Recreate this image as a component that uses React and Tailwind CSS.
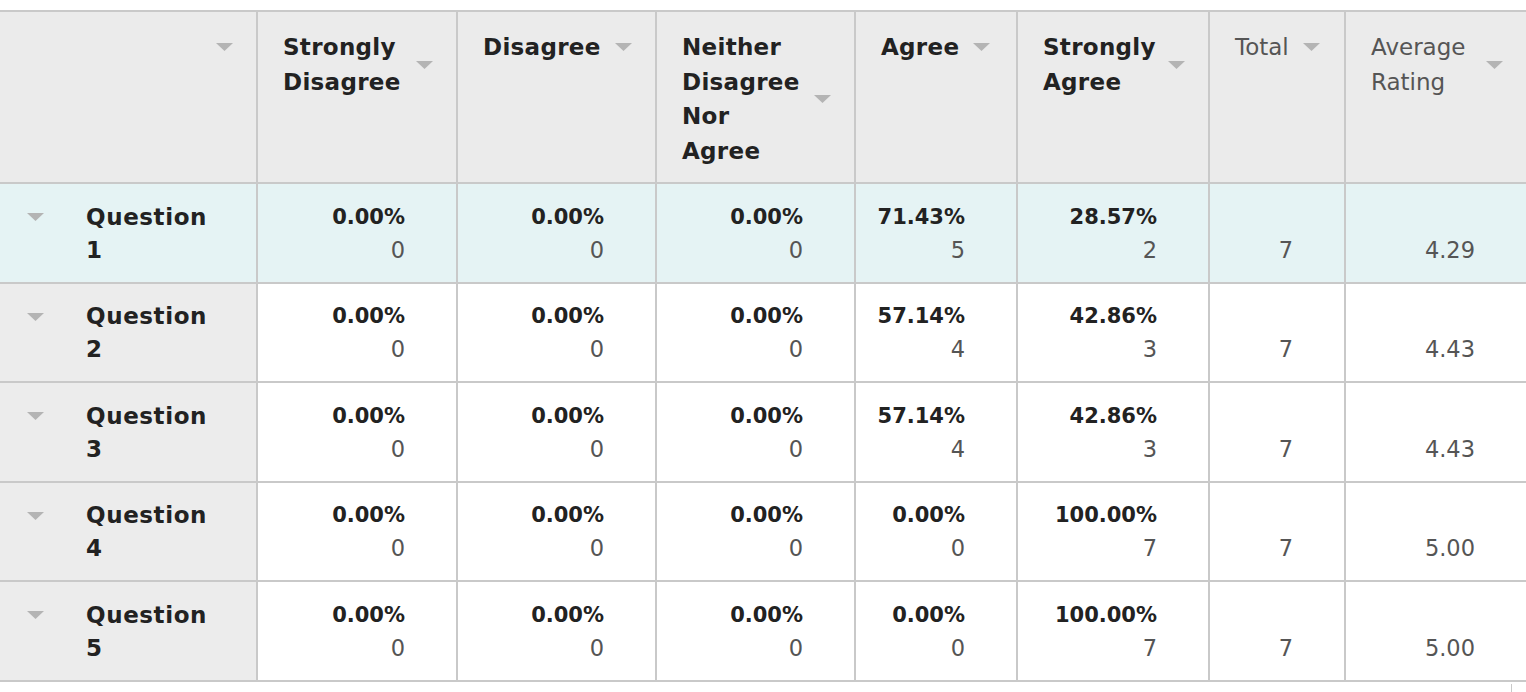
import React from "react";

const cols = "grid grid-cols-[258px_200px_199px_199px_162px_192px_136px_180px]";
const line = "border-[#c9c9c9]";

const headers = [
  { lines: [], wrap: true },
  { lines: ["Strongly", "Disagree"], wrap: true },
  { lines: ["Disagree"] },
  { lines: ["Neither", "Disagree", "Nor", "Agree"], wrap: true },
  { lines: ["Agree"] },
  { lines: ["Strongly", "Agree"], wrap: true },
  { lines: ["Total"], light: true },
  { lines: ["Average", "Rating"], wrap: true, light: true },
];

const rows = [
  { n: 1, v: [["0.00%", 0], ["0.00%", 0], ["0.00%", 0], ["71.43%", 5], ["28.57%", 2]], total: 7, avg: "4.29", hi: true },
  { n: 2, v: [["0.00%", 0], ["0.00%", 0], ["0.00%", 0], ["57.14%", 4], ["42.86%", 3]], total: 7, avg: "4.43" },
  { n: 3, v: [["0.00%", 0], ["0.00%", 0], ["0.00%", 0], ["57.14%", 4], ["42.86%", 3]], total: 7, avg: "4.43" },
  { n: 4, v: [["0.00%", 0], ["0.00%", 0], ["0.00%", 0], ["0.00%", 0], ["100.00%", 7]], total: 7, avg: "5.00" },
  { n: 5, v: [["0.00%", 0], ["0.00%", 0], ["0.00%", 0], ["0.00%", 0], ["100.00%", 7]], total: 7, avg: "5.00" },
];

function Arrow() {
  return (
    <svg width="17" height="8" viewBox="0 0 17 8" className="shrink-0">
      <path d="M0 0H17L8.5 8Z" fill="#b4b4b4" />
    </svg>
  );
}

function HeaderCell({ h, last }) {
  return (
    <div
      className={`h-[172px] bg-[#ebebeb] border-b-2 ${line} ${last ? "" : "border-r-2"} pl-[25px] pr-[23px] pt-[18px]`}
    >
      <div className="flex items-center">
        <div
          className={`${h.wrap ? "flex-1" : ""} min-h-[34.5px] leading-[34.5px] text-[23px] whitespace-nowrap ${
            h.light ? "font-normal text-[#555] text-[22.5px]" : "font-bold text-[#222] tracking-[0.3px]"
          }`}
        >
          {h.lines.map((l) => (
            <div key={l}>{l}</div>
          ))}
        </div>
        <div className={h.wrap ? "" : "ml-[14px]"}>
          <Arrow />
        </div>
      </div>
    </div>
  );
}

function ValueCell({ pct, count, bg, last }) {
  return (
    <div
      className={`h-[99.5px] ${bg} border-b-2 ${line} ${last ? "" : "border-r-2"} pt-[16.5px] pr-[51px] text-right leading-[33px]`}
    >
      <div className="h-[33px] font-bold text-[21px] text-[#222]">{pct}</div>
      <div className="h-[33px] text-[22.5px] text-[#555]">{count}</div>
    </div>
  );
}

export default function App() {
  return (
    <div className="bg-white w-[1526px] h-[692px] pt-[10px] font-['DejaVu_Sans',sans-serif]">
      <div className={`${cols} border-t-2 ${line}`}>
        {headers.map((h, i) => (
          <HeaderCell key={i} h={h} last={i === headers.length - 1} />
        ))}
        {rows.map((r) => {
          const bg = r.hi ? "bg-[#e5f3f4]" : "bg-white";
          return (
            <React.Fragment key={r.n}>
              <div
                className={`h-[99.5px] ${r.hi ? "bg-[#e5f3f4]" : "bg-[#ececec]"} border-b-2 border-r-2 ${line} pt-[16.5px] pl-[27px] flex items-start`}
              >
                <div className="h-[33px] flex items-center">
                  <Arrow />
                </div>
                <div className="ml-[42px] font-bold text-[23px] tracking-[0.6px] leading-[33px] text-[#222]">
                  <div>Question</div>
                  <div>{r.n}</div>
                </div>
              </div>
              {r.v.map(([p, c], i) => (
                <ValueCell key={i} pct={p} count={c} bg={bg} />
              ))}
              <ValueCell pct="" count={r.total} bg={bg} />
              <ValueCell pct="" count={r.avg} bg={bg} last />
            </React.Fragment>
          );
        })}
      </div>
      <div className="ml-[1511px] mt-[2px] w-px h-[8px] bg-[#c9c9c9]" />
    </div>
  );
}
